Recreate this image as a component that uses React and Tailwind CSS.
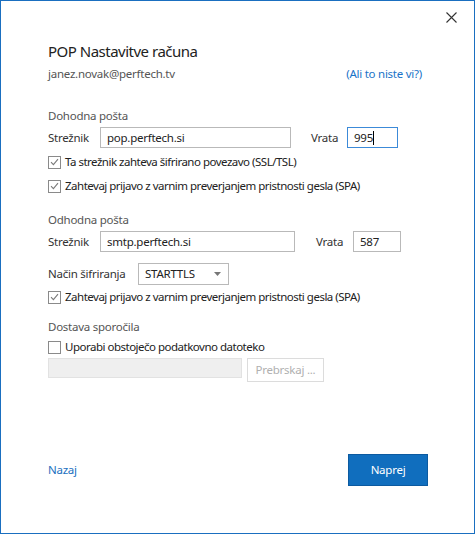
function Check({ checked, label }) {
  return (
    <label className="flex items-center gap-[4px] h-[20px]">
      <span className="w-[13px] h-[13px] border border-[#8a8a8a] bg-white flex items-center justify-center">
        {checked && (
          <svg width="9" height="8" viewBox="0 0 9 8" fill="none">
            <path d="M1 4.2 L3.4 6.6 L8 1.2" stroke="#7a7a7a" strokeWidth="1.1" />
          </svg>
        )}
      </span>
      <span className="text-[#222] tracking-[-0.5px]">{label}</span>
    </label>
  );
}

function Field({ value, className, focused }) {
  return (
    <div
      className={`h-[21px] border ${focused ? "border-[#3c8ad8]" : "border-[#b9b9b9]"} bg-white flex items-center px-[6px] text-[#222] ${className}`}
    >
      {value}
      {focused && <span className="w-px h-[14px] bg-black" />}
    </div>
  );
}

export default function App() {
  return (
    <div
      className="w-[475px] h-[534px] border border-[#1a6fc0] bg-white flex flex-col text-[11.5px] tracking-[-0.25px] text-[#444] relative"
      style={{ fontFamily: '"Noto Sans", "Open Sans", sans-serif' }}
    >
      <button className="absolute right-[16px] top-[9px] w-[14px] h-[14px] flex items-center justify-center" type="button">
        <svg width="11" height="11" viewBox="0 0 11 11">
          <path d="M0.5 0.5 L10.5 10.5 M10.5 0.5 L0.5 10.5" stroke="#333" strokeWidth="1.1" />
        </svg>
      </button>

      <div className="pl-[47px] pr-[52px] pt-[39px]">
        <h1 className="text-[15px] tracking-[-0.5px] text-[#222] leading-[22px]">POP Nastavitve računa</h1>
        <div className="flex justify-between mt-[3px] leading-[18px]">
          <span className="text-[#555]">janez.novak@perftech.tv</span>
          <span className="text-[#1a73c8]">(Ali to niste vi?)</span>
        </div>

        <div className="mt-[24px] leading-[18px] text-[#555]">Dohodna pošta</div>
        <div className="flex items-center mt-[2px]">
          <span className="w-[52px] text-[#333]">Strežnik</span>
          <Field value="pop.perftech.si" className="w-[191px]" />
          <span className="ml-[20px] w-[36px] text-[#333]">Vrata</span>
          <Field value="995" className="w-[51px]" focused />
        </div>
        <div className="mt-[4px]">
          <Check checked label="Ta strežnik zahteva šifrirano povezavo (SSL/TSL)" />
        </div>
        <div className="mt-[4px]">
          <Check checked label="Zahtevaj prijavo z varnim preverjanjem pristnosti gesla (SPA)" />
        </div>

        <div className="mt-[15px] leading-[18px] text-[#555]">Odhodna pošta</div>
        <div className="flex items-center mt-[2px]">
          <span className="w-[52px] text-[#333]">Strežnik</span>
          <Field value="smtp.perftech.si" className="w-[195px]" />
          <span className="ml-[21px] w-[37px] text-[#333]">Vrata</span>
          <Field value="587" className="w-[48px]" />
        </div>
        <div className="flex items-center mt-[11px]">
          <span className="w-[90px] text-[#333]">Način šifriranja</span>
          <div className="w-[91px] h-[22px] border border-[#b9b9b9] flex items-center justify-between pl-[6px] pr-[7px] text-[#222]">
            <span>STARTTLS</span>
            <svg width="7" height="4" viewBox="0 0 7 4">
              <path d="M0 0 H7 L3.5 4 Z" fill="#777" />
            </svg>
          </div>
        </div>
        <div className="mt-[2px]">
          <Check checked label="Zahtevaj prijavo z varnim preverjanjem pristnosti gesla (SPA)" />
        </div>

        <div className="mt-[11px] leading-[18px] text-[#555]">Dostava sporočila</div>
        <div className="mt-[1px]">
          <Check label="Uporabi obstoječo podatkovno datoteko" />
        </div>
        <div className="flex items-start gap-[5px] mt-[1px]">
          <div className="w-[194px] h-[20px] bg-[#efefef] border border-[#e2e2e2]" />
          <div className="w-[77px] h-[24px] border border-[#dcdcdc] text-[#b0b0b0] flex items-center justify-center">
            Prebrskaj ...
          </div>
        </div>
      </div>

      <div className="mt-auto mb-[47px] pl-[47px] pr-[46px] flex items-center justify-between">
        <span className="text-[#1a6fc0]">Nazaj</span>
        <button
          type="button"
          className="w-[80px] h-[32px] bg-[#106ebe] border border-[#0c5aa0] text-white"
        >
          Naprej
        </button>
      </div>
    </div>
  );
}
